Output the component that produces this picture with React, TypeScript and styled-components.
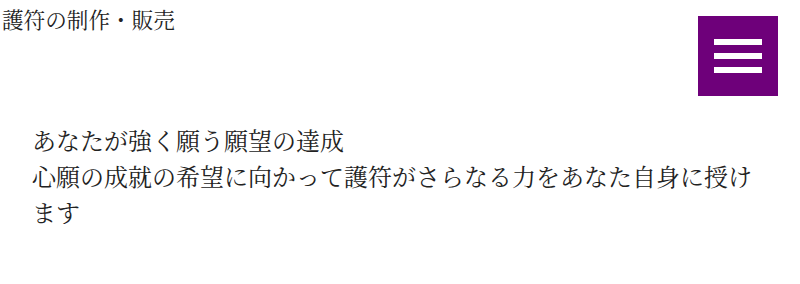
import styled, { createGlobalStyle } from "styled-components";

const GlobalStyle = createGlobalStyle`
  * {
    box-sizing: border-box;
  }
  body {
    margin: 0;
    background: #fff;
    color: #222;
    font-family: "Liberation Serif", "Noto Serif CJK JP", "Noto Sans CJK JP", serif;
  }
`;

const Header = styled.header`
  display: flex;
  justify-content: space-between;
  align-items: flex-start;
  padding: 0 22px 0 2px;
`;

const SiteTitle = styled.h1`
  margin: 8px 0 0;
  font-size: 21.6px;
  font-weight: normal;
  line-height: 26px;
`;

const MenuButton = styled.button`
  margin-top: 16px;
  width: 80px;
  height: 80px;
  border: 0;
  padding: 0;
  background: #6e007a;
  display: flex;
  flex-direction: column;
  align-items: center;
  justify-content: center;
  gap: 8px;
  cursor: pointer;
`;

const Bar = styled.span`
  display: block;
  width: 48px;
  height: 6px;
  background: #fff;
`;

const Main = styled.main`
  padding: 28px 32px;
`;

const Lead = styled.p`
  margin: 0;
  font-size: 24px;
  line-height: 36px;
`;

const App = () => {
  return (
    <>
      <GlobalStyle />
      <Header>
        <SiteTitle>護符の制作・販売</SiteTitle>
        <MenuButton aria-label="menu">
          <Bar />
          <Bar />
          <Bar />
        </MenuButton>
      </Header>
      <Main>
        <Lead>
          あなたが強く願う願望の達成
          <br />
          心願の成就の希望に向かって護符がさらなる力をあなた自身に授けます
        </Lead>
      </Main>
    </>
  );
};

export default App;
